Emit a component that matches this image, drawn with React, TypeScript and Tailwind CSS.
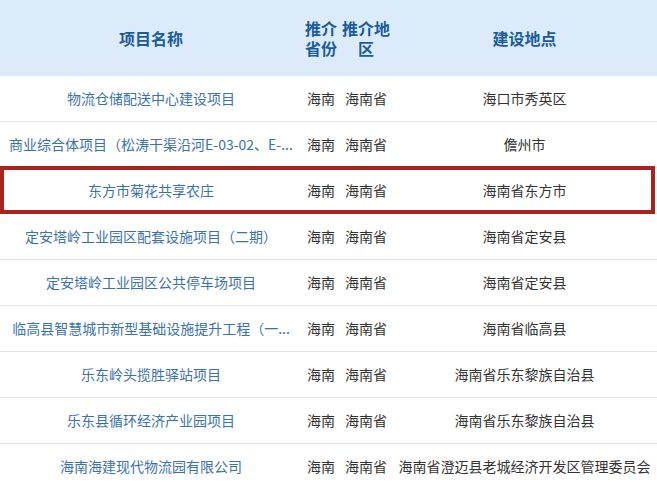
import React from "react";

const rows: { name: string; p: string; r: string; loc: string }[] = [
  { name: "物流仓储配送中心建设项目", p: "海南", r: "海南省", loc: "海口市秀英区" },
  { name: "商业综合体项目（松涛干渠沿河E-03-02、E-...", p: "海南", r: "海南省", loc: "儋州市" },
  { name: "东方市菊花共享农庄", p: "海南", r: "海南省", loc: "海南省东方市" },
  { name: "定安塔岭工业园区配套设施项目（二期）", p: "海南", r: "海南省", loc: "海南省定安县" },
  { name: "定安塔岭工业园区公共停车场项目", p: "海南", r: "海南省", loc: "海南省定安县" },
  { name: "临高县智慧城市新型基础设施提升工程（一...", p: "海南", r: "海南省", loc: "海南省临高县" },
  { name: "乐东岭头揽胜驿站项目", p: "海南", r: "海南省", loc: "海南省乐东黎族自治县" },
  { name: "乐东县循环经济产业园项目", p: "海南", r: "海南省", loc: "海南省乐东黎族自治县" },
  { name: "海南海建现代物流园有限公司", p: "海南", r: "海南省", loc: "海南省澄迈县老城经济开发区管理委员会" },
];

export default function App() {
  return (
    <div
      className="w-[657px] h-[487px] overflow-hidden bg-white"
      style={{ fontFamily: '"Noto Sans CJK SC", "Noto Sans", sans-serif' }}
    >
      <div className="grid grid-cols-[302px_38px_52px_1fr] h-[76px] bg-[#dcebf9] text-[#1b5c99] font-bold text-[16px] leading-[20px]">
        <div className="flex items-center justify-center">项目名称</div>
        <div className="flex items-center justify-center">
          <div>推介<br />省份</div>
        </div>
        <div className="flex items-center justify-center text-center">
          <div>推介地<br />区</div>
        </div>
        <div className="flex items-center justify-center">建设地点</div>
      </div>
      {rows.map((row, i) => (
        <div
          key={i}
          className="relative grid grid-cols-[302px_38px_52px_1fr] h-[46px] border-b border-[#e3e3e3] text-[14px]"
        >
          <div className="flex items-center justify-center px-[7px] overflow-hidden whitespace-nowrap text-[#3a72aa]">
            {row.name}
          </div>
          <div className="flex items-center justify-center whitespace-nowrap text-[#333]">{row.p}</div>
          <div className="flex items-center justify-center whitespace-nowrap text-[#333]">{row.r}</div>
          <div className="flex items-center justify-center whitespace-nowrap text-[#333]">{row.loc}</div>
          {i === 2 && (
            <div className="absolute left-0 right-[2px] -top-[2px] bottom-[-1px] border-[4px] border-[#a8231b] pointer-events-none" />
          )}
        </div>
      ))}
    </div>
  );
}
